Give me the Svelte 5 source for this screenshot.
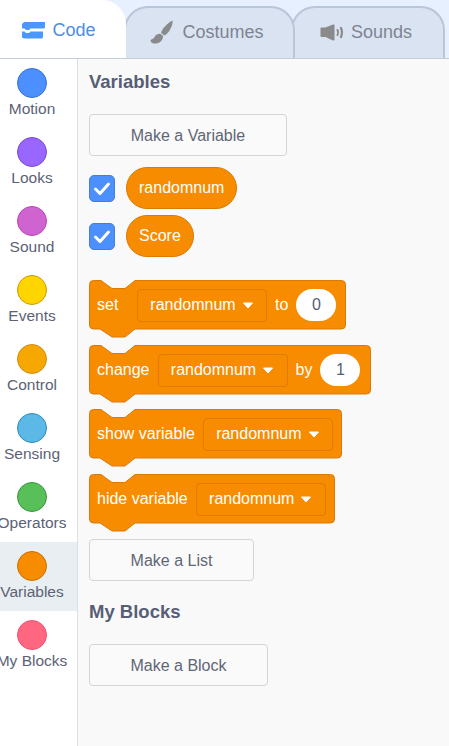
<script>
  const cats = [
    ['Motion', '#4c8fff', '#3373cc'],
    ['Looks', '#9966ff', '#774dcb'],
    ['Sound', '#cf63cf', '#bd42bd'],
    ['Events', '#ffd500', '#cc9900'],
    ['Control', '#f7a800', '#cf8b17'],
    ['Sensing', '#5cb8e6', '#2e8eb8'],
    ['Operators', '#59c059', '#389438'],
    ['Variables', '#f78c00', '#c77000'],
    ['My Blocks', '#ff6680', '#f25070']
  ];
  const blockPath = (w) => {
    const h = 49;
    return `M.5 4.5Q.5 .5 4.5 .5H12L23 8.5H36L46 .5H${w - 4.5}Q${w - .5} .5 ${w - .5} 4.5V${h - 4}Q${w - .5} ${h} ${w - 4.5} ${h}H46L36 ${h + 8}H23L11 ${h}H4.5Q.5 ${h} .5 ${h - 4}Z`;
  };
  const blocks = [
    { w: 257, pre: 'set', post: 'to', val: '0', preW: 32 },
    { w: 282, pre: 'change', post: 'by', val: '1' },
    { w: 253, pre: 'show variable' },
    { w: 246, pre: 'hide variable' }
  ];
</script>

<div class="app">
  <div class="tabs">
    <div class="tab code">
      <svg width="23" height="17" viewBox="0 0 23 17"><path d="M2 0h21v5.500l-1 1H8.500L7 8H4L2.500 6.500H0V2z" fill="#4c97ff"/><path d="M0 9.500h2.500L4 11h3l1.500-1.500H21v6l-1 1H2l-2-1z" fill="#4c97ff"/></svg>
      <span>Code</span>
    </div>
    <div class="tab costumes">
      <svg width="24" height="24" viewBox="0 0 24 24"><path d="M22.500.500c.5 2.500-1 7.500-4 11.500-1.500 2-2.800 3-4.300 3.500L11 12.800C12 8.500 18 2.800 22.500.500z" fill="#8a8a8a"/><path d="M9 13.800c1-.3 1.500 0 2 .5l1.500 1.300c.6.500.7 1 .5 1.700-.6 3.200-2.700 5.700-6.500 6.200-3.200.3-5.800-1-6-2.800 0-1 .8-1.500 1.800-1.800 1.500-.4 2-1.200 2.500-2.400.7-1.500 2.400-2.200 4.200-2.700z" fill="#8a8a8a"/></svg>
      <span>Costumes</span>
    </div>
    <div class="tab sounds">
      <svg width="23" height="17" viewBox="0 0 23 17"><path d="M.500 4.500c0-.5.500-1 1-1h4L13 .500c.7-.3 1.500 0 1.500 1v14c0 1-.8 1.300-1.500 1l-7.500-3.500h-4c-.5 0-1-.5-1-1z" fill="#8a8a8a"/><path d="M17.500 6c.8 1.500.8 3.500 0 5" fill="none" stroke="#8a8a8a" stroke-width="2" stroke-linecap="round"/><path d="M21 4c1.200 3 1.200 6 0 9" fill="none" stroke="#8a8a8a" stroke-width="2.200" stroke-linecap="round"/></svg>
      <span>Sounds</span>
    </div>
  </div>

  <div class="main">
    <nav class="side">
      {#each cats as c}
        <div class="cat" class:active={c[0] === 'Variables'}>
          <span class="dot" style="background:{c[1]};border-color:{c[2]}"></span>
          <span class="lab">{c[0]}</span>
        </div>
      {/each}
    </nav>

    <section class="palette">
      <h2 class="h1">Variables</h2>
      <button class="btn b1">Make a Variable</button>

      <div class="rep r1">
        <span class="check"><svg width="18" height="15" viewBox="0 0 18 15"><path d="M2.500 8l4.500 4.500 8.500-9.500" fill="none" stroke="#fff" stroke-width="3" stroke-linecap="round" stroke-linejoin="round"/></svg></span>
        <span class="pill">randomnum</span>
      </div>
      <div class="rep r2">
        <span class="check"><svg width="18" height="15" viewBox="0 0 18 15"><path d="M2.500 8l4.500 4.500 8.500-9.500" fill="none" stroke="#fff" stroke-width="3" stroke-linecap="round" stroke-linejoin="round"/></svg></span>
        <span class="pill">Score</span>
      </div>

      <div class="stack">
        {#each blocks as b}
          <div class="block" style="width:{b.w}px">
            <svg class="shape" width={b.w} height="58" viewBox="0 0 {b.w} 58"><path d={blockPath(b.w)} fill="#f78c00" stroke="#d97a06"/></svg>
            <span class="t" style={b.preW ? `width:${b.preW}px` : ''}>{b.pre}</span>
            <span class="dd">randomnum <svg width="12" height="7" viewBox="0 0 12 7"><path d="M1.500 1h9L6 6z" fill="#fff" stroke="#fff" stroke-linejoin="round"/></svg></span>
            {#if b.post}
              <span class="t">{b.post}</span>
              <span class="num">{b.val}</span>
            {/if}
          </div>
        {/each}
      </div>

      <button class="btn b2">Make a List</button>
      <h2 class="h2">My Blocks</h2>
      <button class="btn b3">Make a Block</button>
    </section>
  </div>
</div>

<style>
  :global(body) { margin: 0; background: #fff; }
  .app {
    width: 449px; height: 746px; overflow: hidden; display: flex; flex-direction: column;
    font-family: "Liberation Sans", Arial, sans-serif; background: #e6f0ff; color: #575e75;
  }
  .tabs { height: 58px; display: flex; align-items: flex-end; flex: none; }
  .tab {
    box-sizing: border-box; display: flex; align-items: center; justify-content: center;
    border: 2px solid #b9c5d8; border-bottom: 0; border-radius: 24px 24px 0 0;
    background: #d9e3f2; color: #7f8491; font-size: 18px; height: 52px; gap: 8px; padding-bottom: 2px;
  }
  .code {
    width: 126px; height: 58px; background: #fff; border: 0; border-radius: 0 24px 0 0;
    color: #4c8ee0; position: relative; z-index: 2; gap: 7px; padding: 3px 8px 0 0;
  }
  .costumes { width: 171px; margin-left: -2px; z-index: 1; position: relative; padding-right: 5px; }
  .sounds { width: 154px; margin-left: -4px; padding-right: 4px; }

  .main { flex: 1; display: flex; border-top: 1px solid #c4ccda; min-height: 0; }
  .side { width: 78px; box-sizing: border-box; flex: none; background: #fff; border-right: 1px solid #dcdfe4; }
  .cat { height: 69px; display: flex; flex-direction: column; align-items: center; padding-right: 13px; box-sizing: border-box; }
  .cat.active { background: #e9eef2; }
  .dot { box-sizing: border-box; width: 30px; height: 30px; border-radius: 50%; border: 1px solid; margin-top: 9px; flex: none; }
  .lab { font-size: 15.500px; line-height: 18px; margin-top: 2px; white-space: nowrap; color: #5c6275; }

  .palette { flex: 1; background: #f9f9f9; padding-left: 11px; }
  h2 { margin: 0; font-size: 18.500px; font-weight: 700; line-height: 22px; color: #575e75; }
  .h1 { margin-top: 12px; }
  .btn {
    display: block; box-sizing: border-box; height: 42px; padding: 1px 0 0; background: #fafafa;
    border: 1px solid #d4d4d4; border-radius: 4px; color: #616675;
    font: 16px "Liberation Sans", Arial, sans-serif;
  }
  .b1 { width: 198px; margin-top: 21px; }
  .b2 { width: 165px; margin-top: 15px; }
  .b3 { width: 179px; margin-top: 21px; }
  .h2 { margin-top: 20px; }

  .rep { display: flex; align-items: center; gap: 11px; height: 42px; }
  .r1 { margin-top: 11px; }
  .r2 { margin-top: 6px; }
  .check { width: 26px; height: 27px; box-sizing: border-box; border-radius: 5px; background: #4c8fff; border: 1px solid #4280d7; display: flex; align-items: center; justify-content: center; }
  .pill { height: 42px; box-sizing: border-box; padding: 0 12px; border-radius: 21px; background: #f78c00; border: 1px solid #d97a06; color: #fff; font-size: 16px; display: flex; align-items: center; }

  .stack { display: flex; flex-direction: column; gap: 15px; margin-top: 23px; }
  .block { position: relative; height: 50px; display: flex; align-items: center; box-sizing: border-box; padding-left: 8px; color: #fff; font-size: 16px; gap: 8px; }
  .block:nth-child(3) { margin-top: -1px; }
  .shape { position: absolute; left: 0; top: 0; }
  .t, .dd, .num { position: relative; }
  .t { white-space: nowrap; }
  .dd { box-sizing: border-box; height: 33px; width: 130px; border: 1px solid #e07b00; border-radius: 4px; display: flex; align-items: center; justify-content: center; gap: 6px; }
  .num { box-sizing: border-box; width: 40px; height: 32px; border-radius: 16px; background: #fff; color: #575e75; display: flex; align-items: center; justify-content: center; }
</style>
